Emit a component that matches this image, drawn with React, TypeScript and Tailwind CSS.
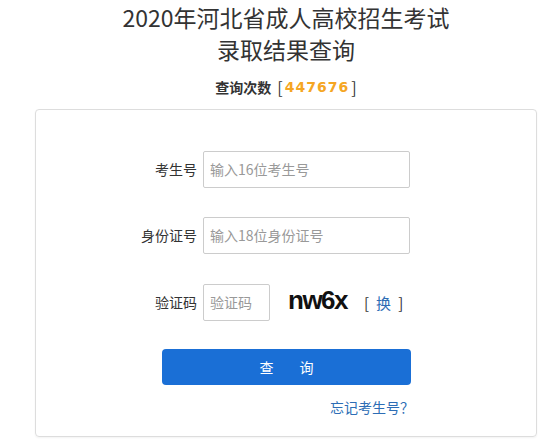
import React from "react";

const font = { fontFamily: '"Microsoft YaHei", "Noto Sans CJK SC", "Noto Sans", sans-serif' };

export default function App() {
  return (
    <div className="w-[549px] h-[442px] bg-white overflow-hidden text-[#333]" style={font}>
      <div className="ml-[35px] w-[502px] flex flex-col items-center">
        <div className="pt-[1px] text-[23px] leading-[32px] text-center text-[#333]">
          <div>2020年河北省成人高校招生考试</div>
          <div>录取结果查询</div>
        </div>
        <div className="mt-[12px] h-[20px] text-[14px] leading-[20px] font-bold text-[#333] flex items-center">
          <span>查询次数</span>
          <span className="ml-[6px] text-[16px] font-normal">[</span>
          <span className="text-[#f5a623] tracking-[1px] mx-[2px]" style={{ fontFamily: '"DejaVu Sans", sans-serif' }}>447676</span>
          <span className="text-[16px] font-normal">]</span>
        </div>
      </div>
      <div className="mt-[12px] ml-[35px] w-[502px] h-[328px] border border-[#ddd] rounded-[4px] shadow-[0_1px_2px_rgba(0,0,0,0.05)] pt-[41px]">
        <div className="flex items-center ml-[97px] h-[37px]">
          <div className="w-[64px] mr-[6px] text-right text-[14px]">考生号</div>
          <div className="w-[207px] h-[37px] border border-[#ccc] rounded-[2px] flex items-center pl-[6px] text-[14px] text-[#999]">
            输入16位考生号
          </div>
        </div>
        <div className="flex items-center ml-[97px] mt-[29px] h-[37px]">
          <div className="w-[64px] mr-[6px] text-right text-[14px]">身份证号</div>
          <div className="w-[207px] h-[37px] border border-[#ccc] rounded-[2px] flex items-center pl-[6px] text-[14px] text-[#999]">
            输入18位身份证号
          </div>
        </div>
        <div className="flex items-center ml-[97px] mt-[30px] h-[37px]">
          <div className="w-[64px] mr-[6px] text-right text-[14px]">验证码</div>
          <div className="w-[67px] h-[37px] border border-[#ccc] rounded-[2px] flex items-center pl-[6px] text-[14px] text-[#999]">
            验证码
          </div>
          <div
            className="ml-[18px] mb-[6px] text-[26px] leading-none font-bold text-[#111] tracking-[-1.5px]"
            style={{ fontFamily: '"Liberation Sans", Arial, sans-serif' }}
          >
            nw6x
          </div>
          <div className="ml-[17px] text-[15px] leading-none text-[#333] flex items-center gap-[7px]">
            <span>[</span>
            <span className="text-[#2d6db5]">换</span>
            <span>]</span>
          </div>
        </div>
        <div className="ml-[126px] mt-[28px] w-[249px] h-[36px] rounded-[4px] bg-[#1a6fd6] flex items-center justify-center text-white text-[14px]">
          查<span className="inline-block w-[26px]" />询
        </div>
        <div className="ml-[126px] w-[252px] mt-[13px] text-right text-[14px] text-[#2d6db5] leading-[18px]">
          忘记考生号？
        </div>
      </div>
    </div>
  );
}
